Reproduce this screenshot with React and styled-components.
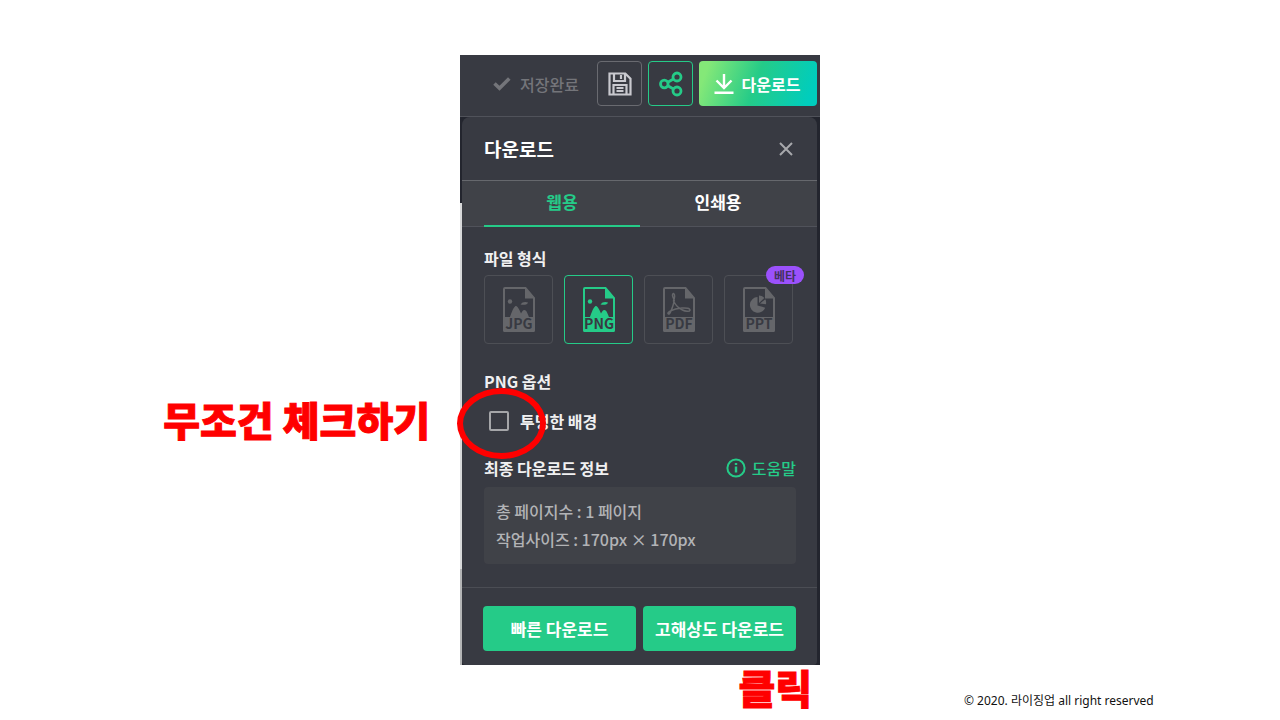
import React, { useState } from "react";
import styled, { createGlobalStyle } from "styled-components";

const GlobalStyle = createGlobalStyle`
  *, *::before, *::after { box-sizing: border-box; }
  body {
    margin: 0;
    background: #fff;
    font-family: "Noto Sans CJK KR", sans-serif;
  }
  button, input { font: inherit; margin: 0; }
`;

const green = "#25cb88";

const Slide = styled.main`
  display: grid;
  grid-template-columns: 1fr 360px 1fr;
  padding-top: 55px;
  min-height: 100vh;
  grid-template-rows: auto 1fr;
`;

const Callout = styled.p`
  margin: 0;
  color: #f00;
  font-size: 40px;
  line-height: 44px;
  font-weight: 900;
  -webkit-text-stroke: 1px #f00;
  white-space: nowrap;
`;

const SideNote = styled(Callout)`
  justify-self: end;
  padding: 342px 30px 0 0;
`;

const BottomNote = styled(Callout)`
  grid-column: 2;
  justify-self: end;
  padding-right: 8px;
`;

const Copyright = styled.footer`
  padding: 26px 0 0 144px;
  font-family: "Noto Sans", "Noto Sans CJK KR", sans-serif;
  font-size: 12px;
  line-height: 20px;
  color: #111;
  white-space: nowrap;
`;

const Editor = styled.section`
  background: #23252e;
`;

const Toolbar = styled.header`
  display: flex;
  align-items: center;
  gap: 6px;
  height: 62px;
  padding: 0 3px 4px 0;
  justify-content: flex-end;
  background: #383a42;
  border-bottom: 1px solid #50525a;
`;

const SaveState = styled.span`
  display: flex;
  align-items: center;
  gap: 9px;
  margin-right: 12px;
  color: #74757a;
  font-size: 16px;
  line-height: 24px;
  font-weight: 500;
`;

const IconButton = styled.button`
  display: grid;
  place-items: center;
  width: 45px;
  height: 45px;
  padding: 0;
  background: none;
  border: 1px solid ${(p) => (p.$accent ? green : "#696a70")};
  border-radius: 4px;
`;

const DownloadButton = styled.button`
  display: flex;
  align-items: center;
  justify-content: center;
  gap: 8px;
  width: 118px;
  height: 45px;
  padding: 0 2px 0 0;
  border: 0;
  border-radius: 4px;
  background: linear-gradient(110deg, #84e878 8%, #25cb88 48%, #00cdbd 92%);
  color: #fff;
  font-size: 16px;
  line-height: 24px;
  font-weight: 700;
`;

const Backdrop = styled.div`
  padding: 0 3px 0 2px;
  background: linear-gradient(#23252e 86px, #d8d9da 86px, #d8d9da 452px, #b4b5b6 452px) left / 2px 100% no-repeat;
`;

const Dialog = styled.div`
  background: #383a42;
  border-radius: 8px 8px 4px 4px;
`;

const DialogHeader = styled.div`
  display: flex;
  justify-content: space-between;
  align-items: center;
  height: 64px;
  padding: 0 24px 0 22px;
  border-bottom: 1px solid #66686d;
`;

const Title = styled.h1`
  margin: 0;
  color: #fff;
  font-size: 19px;
  line-height: 28px;
  font-weight: 700;
`;

const CloseButton = styled.button`
  display: grid;
  padding: 0;
  border: 0;
  background: none;
`;

const Tabs = styled.div`
  display: flex;
  height: 46px;
  padding: 0 21px 0 22px;
  background: #404248;
  border-bottom: 1px solid #50525a;
`;

const Tab = styled.button`
  flex: 1;
  padding: 0 0 2px;
  margin-bottom: -1px;
  border: 0;
  border-bottom: 2px solid ${(p) => (p.$active ? green : "transparent")};
  background: none;
  color: ${(p) => (p.$active ? green : "#fff")};
  font-size: 17px;
  line-height: 24px;
  font-weight: 700;
`;

const Body = styled.div`
  padding: 19px 21px 23px 22px;
`;

const SectionTitle = styled.h2`
  margin: 0;
  color: #f0f0f1;
  font-size: 16px;
  line-height: 24px;
  font-weight: 700;
`;

const Formats = styled.div`
  display: flex;
  gap: 11px;
  margin: 5px 0 25px;
`;

const FormatCard = styled.label`
  position: relative;
  display: grid;
  place-items: center;
  width: 69px;
  height: 69px;
  border: 1px solid ${(p) => (p.$active ? green : "#4d4f55")};
  border-radius: 4px;
  color: ${(p) => (p.$active ? green : "#65666a")};
`;

const HiddenRadio = styled.input`
  position: absolute;
  inset: 0;
  opacity: 0;
`;

const Beta = styled.span`
  position: absolute;
  top: -10px;
  right: -12px;
  width: 38px;
  height: 18px;
  border-radius: 9px;
  background: #9b51fc;
  color: #43325f;
  font-size: 12px;
  line-height: 19px;
  font-weight: 700;
  text-align: center;
`;

const IconLabel = styled.text`
  fill: #383a42;
  font-family: "Noto Sans CJK KR", sans-serif;
  font-size: 14px;
  font-weight: 700;
  text-anchor: middle;
`;

const CheckRow = styled.div`
  position: relative;
  display: flex;
  align-items: center;
  gap: 11px;
  margin: 16px 0 23px 5px;
`;

const Checkbox = styled.input`
  appearance: none;
  width: 20px;
  height: 20px;
  border: 2px solid #a5a6a9;
  border-radius: 2px;
  &:checked { background: ${green}; }
`;

const CheckLabel = styled.label`
  color: #f0f0f1;
  font-size: 16px;
  line-height: 24px;
  font-weight: 700;
`;

const Ring = styled.span`
  position: absolute;
  left: -32px;
  top: -21px;
  width: 89px;
  height: 71px;
  border: 6px solid #f00;
  border-radius: 50%;
  pointer-events: none;
`;

const InfoHeader = styled.div`
  display: flex;
  justify-content: space-between;
  align-items: center;
`;

const HelpLink = styled.a`
  display: flex;
  align-items: center;
  gap: 6px;
  color: ${green};
  font-size: 16px;
  line-height: 24px;
  font-weight: 500;
  text-decoration: none;
`;

const InfoBox = styled.div`
  margin-top: 7px;
  padding: 10px 12px 11px;
  border-radius: 4px;
  background: #404248;
  color: #b2b3b6;
  font-size: 16px;
  line-height: 28px;
  font-weight: 500;
`;

const InfoLine = styled.p`
  margin: 0;
`;

const Actions = styled.div`
  display: flex;
  gap: 7px;
  padding: 18px 21px 14px;
  border-top: 1px solid #4b4d54;
`;

const ActionButton = styled.button`
  flex: 1;
  height: 45px;
  padding: 0;
  border: 0;
  border-radius: 4px;
  background: ${green};
  color: #fff;
  font-size: 17px;
  line-height: 24px;
  font-weight: 700;
  white-space: nowrap;
`;

const CheckIcon = () => (
  <svg width="18" height="14" viewBox="0 0 18 14" fill="none" stroke="#74757a" strokeWidth="3.6">
    <path d="M1.5 6.5 6.5 11.3 16.300 1.500" />
  </svg>
);

const SaveIcon = () => (
  <svg width="24" height="24" viewBox="0 0 24 24" fill="none" stroke="#c9c9cf" strokeWidth="2.200">
    <path d="M1.500 1.500h15.800l5.200 5.200v15.800h-21z" />
    <path d="M6 2v7h11V2M13 3v4M5.500 22v-9h13v9M8.500 16h7M8.500 19h7" />
  </svg>
);

const ShareIcon = () => (
  <svg width="24" height="26" viewBox="0 0 24 26" fill="none" stroke={green} strokeWidth="2.800">
    <circle cx="5.300" cy="13" r="3.800" />
    <circle cx="18" cy="6" r="4" />
    <circle cx="18" cy="20" r="4" />
    <path d="M8.800 11.200 14.500 8M8.800 14.800 14.500 18" />
  </svg>
);

const DownloadIcon = () => (
  <svg width="20" height="20" viewBox="0 0 20 20" fill="none" stroke="#fff" strokeWidth="2.400">
    <path d="M10 0v14M2.500 6.500l7.500 7.500 7.500-7.500M.500 18.700h19" />
  </svg>
);

const CloseIcon = () => (
  <svg width="14" height="14" viewBox="0 0 14 14" stroke="#a7a8ab" strokeWidth="2">
    <path d="M1 1l12 12M13 1 1 13" />
  </svg>
);

const InfoIcon = () => (
  <svg width="20" height="20" viewBox="0 0 20 20" fill="none" stroke={green} strokeWidth="2">
    <circle cx="10" cy="10" r="8.600" />
    <path d="M10 8.600v6M10 5v2" strokeWidth="2.400" />
  </svg>
);

const PictureArt = () => (
  <g fill="currentColor">
    <circle cx="7" cy="14.500" r="2.200" />
    <path d="M17.500 17.500c1.500-2.600 5-3 7.500-2-.4 2-3.500 2.800-7.500 2z" />
    <path d="M6.500 31c1.500-3 3-9.500 5.500-11.500 1-.8 1.700-.3 2.500.5 1.500 1.600 2.500 4.300 3.500 6.500 1-1.800 2-3.500 3.300-3.500 2.500 0 3.500 4.500 5.200 8z" />
  </g>
);

const PdfArt = () => (
  <g fill="none" stroke="currentColor" strokeWidth="1.500">
    <path d="M10.500 6.500c1.800.5 1.200 4.500 0 7.500 2 4 5.500 7.500 9 9 2.500 1.200 7 2.200 7.500.3.500-2-4-2.500-8-2.200-4 .3-8.500 1.300-12 3-2 1-2.600 2.600-1.500 3 1.800.3 4.700-8.300 5.800-13.800-.8-2.200-3.200-6-.8-6.800z" />
  </g>
);

const ChartArt = () => (
  <g fill="currentColor">
    <path d="M14.500 10v8.500l7.700 2.200A7.900 7.900 0 1 1 14.500 10z" />
    <path d="M16 8.500c2 0 4 1 5.300 2.500L16 16z" />
    <path d="M22.300 12.300c.8 1.400 1 3 .7 5l-6-.8z" />
  </g>
);

const art = { JPG: PictureArt, PNG: PictureArt, PDF: PdfArt, PPT: ChartArt };

const FileIcon = ({ type }) => {
  const Art = art[type];
  return (
    <svg width="32" height="46" viewBox="0 0 32 46">
      <path d="M1 31V2q0-1 1-1h20.500L31 11v20" fill="none" stroke="currentColor" strokeWidth="2" />
      <path d="M22 0 32 11.500H22zM0 30h32v13.500q0 1.500-1.500 1.500h-29Q0 45 0 43.500z" fill="currentColor" />
      <Art />
      <IconLabel x="16" y="42">{type}</IconLabel>
    </svg>
  );
};

export default function App() {
  const [format, setFormat] = useState("PNG");
  const [tab, setTab] = useState("웹용");
  return (
    <>
      <GlobalStyle />
      <Slide>
        <SideNote>무조건 체크하기</SideNote>
        <Editor>
          <Toolbar>
            <SaveState><CheckIcon />저장완료</SaveState>
            <IconButton type="button" aria-label="저장"><SaveIcon /></IconButton>
            <IconButton type="button" aria-label="공유" $accent><ShareIcon /></IconButton>
            <DownloadButton type="button"><DownloadIcon />다운로드</DownloadButton>
          </Toolbar>
          <Backdrop>
            <Dialog role="dialog">
              <DialogHeader>
                <Title>다운로드</Title>
                <CloseButton type="button" aria-label="닫기"><CloseIcon /></CloseButton>
              </DialogHeader>
              <Tabs role="tablist">
                {["웹용", "인쇄용"].map((name) => (
                  <Tab key={name} type="button" role="tab" aria-selected={tab === name} $active={tab === name} onClick={() => setTab(name)}>
                    {name}
                  </Tab>
                ))}
              </Tabs>
              <Body>
                <SectionTitle>파일 형식</SectionTitle>
                <Formats>
                  {Object.keys(art).map((type) => (
                    <FormatCard key={type} $active={format === type}>
                      <HiddenRadio type="radio" name="format" value={type} checked={format === type} onChange={() => setFormat(type)} />
                      <FileIcon type={type} />
                      {type === "PPT" && <Beta>베타</Beta>}
                    </FormatCard>
                  ))}
                </Formats>
                <SectionTitle>PNG 옵션</SectionTitle>
                <CheckRow>
                  <Checkbox id="transparent" type="checkbox" />
                  <CheckLabel htmlFor="transparent">투명한 배경</CheckLabel>
                  <Ring />
                </CheckRow>
                <InfoHeader>
                  <SectionTitle>최종 다운로드 정보</SectionTitle>
                  <HelpLink href="#help"><InfoIcon />도움말</HelpLink>
                </InfoHeader>
                <InfoBox>
                  <InfoLine>총 페이지수 : 1 페이지</InfoLine>
                  <InfoLine>작업사이즈 : 170px × 170px</InfoLine>
                </InfoBox>
              </Body>
              <Actions>
                <ActionButton type="button">빠른 다운로드</ActionButton>
                <ActionButton type="button">고해상도 다운로드</ActionButton>
              </Actions>
            </Dialog>
          </Backdrop>
        </Editor>
        <BottomNote>클릭</BottomNote>
        <Copyright>© 2020. 라이징업 all right reserved</Copyright>
      </Slide>
    </>
  );
}
